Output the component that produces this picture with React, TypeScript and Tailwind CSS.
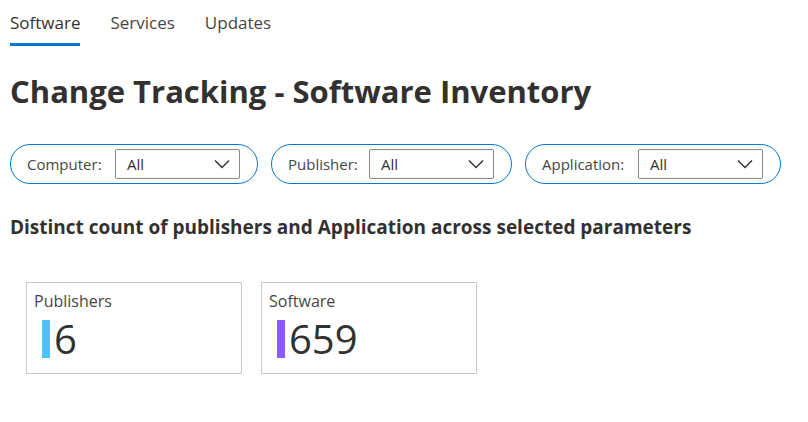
const font = { fontFamily: '"Open Sans", "Noto Sans", sans-serif' }

function Chevron() {
  return (
    <svg width="16" height="10" viewBox="0 0 16 10" fill="none" className="shrink-0">
      <polyline points="1,1.5 8,8.5 15,1.5" stroke="#323130" strokeWidth="1.4" />
    </svg>
  )
}

interface FilterProps {
  label: string
  width: string
}

function Filter({ label, width }: FilterProps) {
  return (
    <div className={`flex h-[40px] items-center justify-between rounded-full border border-[#0078d4] pl-4 pr-[17px] ${width}`}>
      <span className="text-[15px] text-[#484644]">{label}</span>
      <div className="flex h-[30px] w-[125px] items-center justify-between rounded-[2px] border border-[#8a8886] pl-[11px] pr-[9px]">
        <span className="text-[15px] text-[#323130]">All</span>
        <Chevron />
      </div>
    </div>
  )
}

interface TileProps {
  label: string
  value: string
  bar: string
}

function Tile({ label, value, bar }: TileProps) {
  return (
    <div className="h-[92px] w-[216px] border border-[#c8c8c8] px-[7px] pt-[8px]">
      <div className="text-[16px] leading-5 text-[#484644]">{label}</div>
      <div className="mt-[9px] flex items-center pl-[8px]">
        <div className={`h-[38px] w-[8px] ${bar}`} />
        <span className="ml-[4px] text-[40px] leading-[38px] text-[#323130]">{value}</span>
      </div>
    </div>
  )
}

export default function App() {
  const tabs = ['Software', 'Services', 'Updates']

  return (
    <div className="h-[422px] w-[808px] overflow-hidden bg-white px-[10px]" style={font}>
      <div className="flex gap-[30px] pt-[11px]">
        {tabs.map((t, i) => (
          <div
            key={t}
            className={`pb-[8px] text-[17px] leading-[24px] ${i === 0 ? 'border-b-[3px] border-[#0078d4] text-[#323130]' : 'border-b-[3px] border-transparent text-[#484644]'}`}
          >
            {t}
          </div>
        ))}
      </div>

      <h1 className="mt-[25px] text-[31px] font-bold leading-[40px] text-[#323130]">
        Change Tracking - Software Inventory
      </h1>

      <div className="mt-[33px] flex gap-[13px]">
        <Filter label="Computer:" width="w-[248px]" />
        <Filter label="Publisher:" width="w-[241px]" />
        <Filter label="Application:" width="w-[256px]" />
      </div>

      <h2 className="mt-[31px] text-[19px] font-bold leading-[24px] text-[#323130]">
        Distinct count of publishers and Application across selected parameters
      </h2>

      <div className="mt-[43px] flex gap-[19px] pl-[16px]">
        <Tile label="Publishers" value="6" bar="bg-[#4cc2f5]" />
        <Tile label="Software" value="659" bar="bg-[#8a5cff]" />
      </div>
    </div>
  )
}
